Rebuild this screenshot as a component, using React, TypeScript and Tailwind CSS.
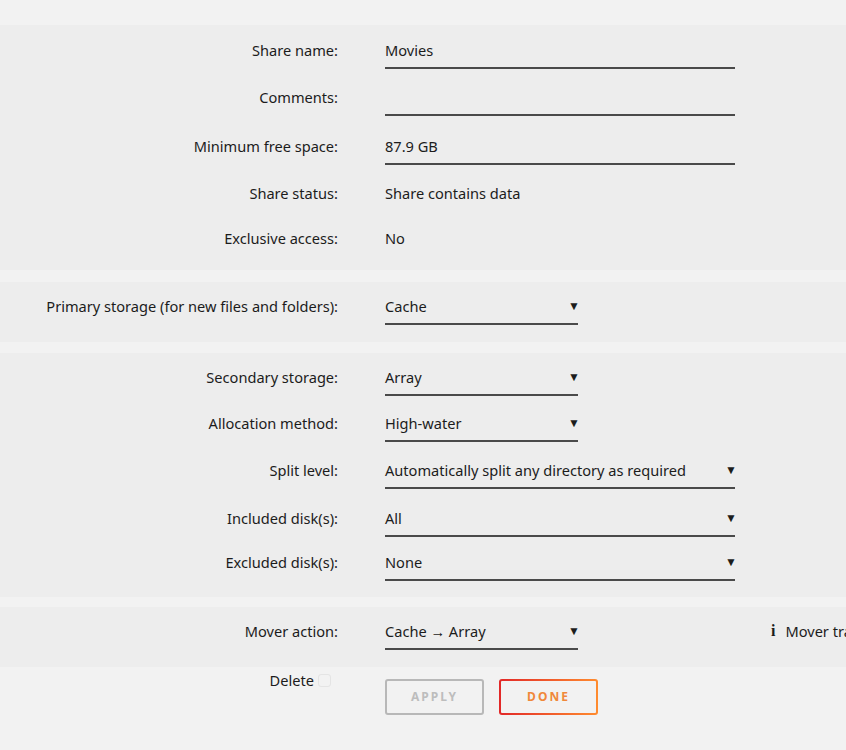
import React from 'react'

const font = { fontFamily: '"Noto Sans", "Liberation Sans", sans-serif' }

type Row = {
  label: string
  value?: string
  kind?: 'input' | 'text' | 'select' | 'selectWide'
  h?: number
}

function Arrow() {
  return <span className="text-[12px] leading-[20px] text-[#1c1c1c] -mr-[2px]">▼</span>
}

function Value({ row }: { row: Row }) {
  if (row.kind === 'text') {
    return <div className="leading-[20px]">{row.value}</div>
  }
  if (row.kind === 'input') {
    return <div className="w-[350px] h-[29px] leading-[20px] border-b-2 border-[#4a4a4a]">{row.value}</div>
  }
  const w = row.kind === 'selectWide' ? 'w-[350px]' : 'w-[193px]'
  return (
    <div className={`${w} h-[29px] flex items-start justify-between border-b-2 border-[#4a4a4a]`}>
      <span className="leading-[20px]">{row.value}</span>
      <Arrow />
    </div>
  )
}

function FormRow({ row, last }: { row: Row; last?: boolean }) {
  return (
    <div className="flex items-start gap-[47px]" style={last ? undefined : { height: row.h ?? 47 }}>
      <div className="w-[338px] text-right leading-[20px] shrink-0">{row.label}</div>
      <Value row={row} />
    </div>
  )
}

function Section({ rows, className }: { rows: Row[]; className: string }) {
  return (
    <div className={`bg-[#ededed] ${className}`}>
      {rows.map((r, i) => (
        <FormRow key={r.label} row={r} last={i === rows.length - 1} />
      ))}
    </div>
  )
}

export default function App() {
  const share: Row[] = [
    { label: 'Share name:', value: 'Movies', kind: 'input', h: 47 },
    { label: 'Comments:', value: '', kind: 'input', h: 49 },
    { label: 'Minimum free space:', value: '87.9 GB', kind: 'input', h: 47 },
    { label: 'Share status:', value: 'Share contains data', kind: 'text', h: 45 },
    { label: 'Exclusive access:', value: 'No', kind: 'text' },
  ]
  const secondary: Row[] = [
    { label: 'Secondary storage:', value: 'Array', kind: 'select', h: 46 },
    { label: 'Allocation method:', value: 'High-water', kind: 'select', h: 47 },
    { label: 'Split level:', value: 'Automatically split any directory as required', kind: 'selectWide', h: 48 },
    { label: 'Included disk(s):', value: 'All', kind: 'selectWide', h: 44 },
    { label: 'Excluded disk(s):', value: 'None', kind: 'selectWide' },
  ]

  return (
    <div className="w-[846px] min-h-[750px] bg-[#f2f2f2] text-[14.6px] text-[#1c1c1c] overflow-hidden" style={font}>
      <div className="h-[25px]" />
      <Section rows={share} className="h-[245px] pt-[15px]" />
      <div className="h-[12px]" />
      <Section rows={[{ label: 'Primary storage (for new files and folders):', value: 'Cache', kind: 'select' }]} className="h-[60px] pt-[14px]" />
      <div className="h-[11px]" />
      <Section rows={secondary} className="h-[244px] pt-[14px]" />
      <div className="h-[10px]" />
      <div className="bg-[#ededed] h-[60px] pt-[14px] flex items-start gap-[47px] whitespace-nowrap">
        <div className="w-[338px] text-right leading-[20px] shrink-0">Mover action:</div>
        <div className="w-[193px] h-[29px] flex items-start justify-between border-b-2 border-[#4a4a4a] shrink-0">
          <span className="leading-[20px]">
            Cache <span style={{ fontFamily: '"Liberation Sans", sans-serif' }}>→</span> Array
          </span>
          <Arrow />
        </div>
        <div className="flex items-start gap-[10px] ml-[146px] shrink-0">
          <span className="font-bold text-[16px] leading-[20px]" style={{ fontFamily: '"Liberation Serif", serif' }}>i</span>
          <span className="leading-[20px]">Mover transfers</span>
        </div>
      </div>
      <div className="flex items-start gap-[47px] pt-[12px]">
        <div className="w-[338px] shrink-0 flex justify-end items-center gap-[4px] pr-[7px] -mt-[9px]">
          <span className="leading-[20px]">Delete</span>
          <span className="w-[13px] h-[13px] rounded-[3px] border border-[#e4e4e4] bg-[#f2f2f2]" />
        </div>
        <div className="flex gap-[15px]">
          <button className="w-[99px] h-[36px] rounded-[3px] border-2 border-[#b8b8b8] text-[12px] font-bold tracking-[2px] text-[#bdbdbd] bg-transparent">
            APPLY
          </button>
          <button
            className="w-[99px] h-[36px] rounded-[3px] border-2 border-transparent text-[12px] font-bold tracking-[2px] text-[#f0883a]"
            style={{
              background:
                'linear-gradient(#f2f2f2, #f2f2f2) padding-box, linear-gradient(90deg, #e22828, #ff8c2f) border-box',
            }}
          >
            DONE
          </button>
        </div>
      </div>
    </div>
  )
}
